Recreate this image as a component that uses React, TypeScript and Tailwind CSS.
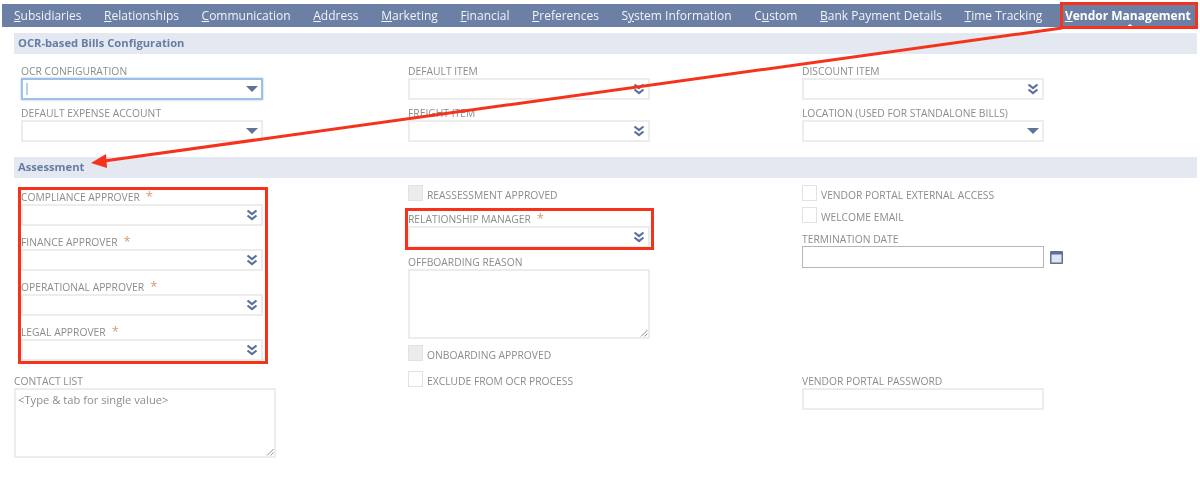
const TABS: [string, string, string][] = [
  ['', 'S', 'ubsidiaries'],
  ['', 'R', 'elationships'],
  ['', 'C', 'ommunication'],
  ['', 'A', 'ddress'],
  ['', 'M', 'arketing'],
  ['', 'F', 'inancial'],
  ['', 'P', 'references'],
  ['S', 'y', 'stem Information'],
  ['C', 'u', 'stom'],
  ['', 'B', 'ank Payment Details'],
  ['', 'T', 'ime Tracking'],
];

function DoubleArrow() {
  return (
    <svg width="12" height="12" viewBox="0 0 12 12" className="shrink-0 text-[#5b7199]" fill="none" stroke="currentColor" strokeWidth="2.2">
      <path d="M1.5 1.5 6 5l4.5-3.5" />
      <path d="M1.5 6.5 6 10l4.5-3.5" />
    </svg>
  );
}

function Caret() {
  return (
    <svg width="12" height="6" viewBox="0 0 12 6" className="shrink-0 text-[#5f7398]" fill="currentColor">
      <path d="M0 0h12L6 6z" />
    </svg>
  );
}

function Grip() {
  return (
    <svg width="8" height="8" viewBox="0 0 8 8" className="absolute bottom-0 right-0 text-[#8c8c8c]" stroke="currentColor" fill="none">
      <path d="M7.5 1 1 7.5M7.5 4.5 4.5 7.5" />
    </svg>
  );
}

function Label({ text, required }: { text: string; required?: boolean }) {
  return (
    <div className="h-[14px] whitespace-nowrap text-[10.3px] leading-[14px] text-[#8c8c8c]">
      {text}
      {required && <span className="ml-[6px] text-[13px] leading-[10px] text-[#d99a6c]">*</span>}
    </div>
  );
}

function Select({ label, required, icon = 'double', focus }: { label: string; required?: boolean; icon?: 'double' | 'caret'; focus?: boolean }) {
  return (
    <div className="w-[242px]">
      <Label text={label} required={required} />
      <div
        className={
          'relative flex h-[22px] items-center justify-end border-2 bg-white pr-[3px] ' +
          (focus ? 'border-[#9dc0e6] shadow-[0_0_2px_#9dc0e6]' : 'border-[#ececec]')
        }
      >
        {focus && <span className="absolute left-[3px] top-[3px] h-[12px] w-[2px] bg-[#b9d0ea]" />}
        {icon === 'double' ? <DoubleArrow /> : <Caret />}
      </div>
    </div>
  );
}

function Check({ label, disabled }: { label: string; disabled?: boolean }) {
  return (
    <div className="flex h-[16px] items-center">
      <span className={'h-[16px] w-[15px] border border-[#e2e2e2] ' + (disabled ? 'bg-[#ececec]' : 'bg-white')} />
      <span className="ml-[4px] mt-[3px] whitespace-nowrap text-[10.3px] leading-[14px] text-[#8c8c8c]">{label}</span>
    </div>
  );
}

function Section({ title }: { title: string }) {
  return (
    <div className="ml-[14px] mr-[3px] flex h-[21px] items-center bg-[#e4e8f1] pl-[4px] text-[11.2px] font-bold text-[#667da3]">
      {title}
    </div>
  );
}

export default function App() {
  return (
    <div className="relative h-[483px] w-[1200px] overflow-hidden bg-white pt-[4px] font-['Open_Sans',sans-serif] blur-[0.6px]">
      <nav className="mx-[2px] flex h-[23px] items-center gap-[22.6px] whitespace-nowrap bg-[#6b80a4] pl-[12px] text-[12px] text-[#f0f3f8]">
        {TABS.map(([a, k, b]) => (
          <span key={k + b}>
            {a}
            <span className="underline">{k}</span>
            {b}
          </span>
        ))}
        <span className="relative font-bold text-white">
          <span className="underline">V</span>endor Management
          <span className="absolute bottom-[-3px] left-[60px] h-0 w-0 border-x-[5px] border-b-[4px] border-x-transparent border-b-white" />
        </span>
      </nav>

      <div className="mt-[6px]">
        <Section title="OCR-based Bills Configuration" />
      </div>
      <div className="flex pl-[21px] pt-[10px]">
        <div className="flex w-[387px] flex-col gap-[6px]">
          <Select label="OCR CONFIGURATION" icon="caret" focus />
          <Select label="DEFAULT EXPENSE ACCOUNT" icon="caret" />
        </div>
        <div className="flex w-[394px] flex-col gap-[6px]">
          <Select label="DEFAULT ITEM" />
          <Select label="FREIGHT ITEM" />
        </div>
        <div className="flex flex-col gap-[6px]">
          <Select label="DISCOUNT ITEM" />
          <Select label="LOCATION (USED FOR STANDALONE BILLS)" icon="caret" />
        </div>
      </div>

      <div className="mt-[15px]">
        <Section title="Assessment" />
      </div>

      <div className="flex pl-[21px] pt-[12px]">
        <div className="w-[387px]">
          <div className="flex flex-col gap-[9px]">
            <Select label="COMPLIANCE APPROVER" required />
            <Select label="FINANCE APPROVER" required />
            <Select label="OPERATIONAL APPROVER" required />
            <Select label="LEGAL APPROVER" required />
          </div>
          <div className="ml-[-7px] mt-[13px] w-[262px]">
            <Label text="CONTACT LIST" />
            <div className="relative h-[70px] border-2 border-[#ececec] px-[2px] py-[2px] text-[11.2px] text-[#8c8c8c]">
              &lt;Type &amp; tab for single value&gt;
              <Grip />
            </div>
          </div>
        </div>

        <div className="w-[394px]">
          <div className="mt-[-5px]">
            <Check label="REASSESSMENT APPROVED" disabled />
          </div>
          <div className="mt-[11px]">
            <Select label="RELATIONSHIP MANAGER" required />
          </div>
          <div className="mt-[7px] w-[242px]">
            <Label text="OFFBOARDING REASON" />
            <div className="relative h-[70px] border-2 border-[#ececec]">
              <Grip />
            </div>
          </div>
          <div className="mt-[6px]">
            <Check label="ONBOARDING APPROVED" disabled />
          </div>
          <div className="mt-[10px]">
            <Check label="EXCLUDE FROM OCR PROCESS" />
          </div>
        </div>

        <div className="w-[270px]">
          <div className="mt-[-5px]">
            <Check label="VENDOR PORTAL EXTERNAL ACCESS" />
          </div>
          <div className="mt-[6px]">
            <Check label="WELCOME EMAIL" />
          </div>
          <div className="mt-[9px]">
            <Label text="TERMINATION DATE" />
            <div className="flex items-center">
              <div className="h-[22px] w-[242px] border border-[#b5b5b5] bg-white" />
              <svg width="13" height="13" viewBox="0 0 13 13" className="ml-[6px]">
                <rect width="13" height="13" rx="1" fill="#5b7199" />
                <rect x="1.5" y="3.5" width="10" height="8" fill="#dfe5ef" />
              </svg>
            </div>
          </div>
          <div className="mt-[106px]">
            <Label text="VENDOR PORTAL PASSWORD" />
            <div className="h-[22px] w-[242px] border-2 border-[#ececec]" />
          </div>
        </div>
      </div>

      {/* red annotations */}
      <div className="absolute left-[1060px] top-[2px] h-[27px] w-[138px] border-[3px] border-[#f5331c]" />
      <div className="absolute left-[18px] top-[187px] h-[177px] w-[250px] border-[3px] border-[#f5331c]" />
      <div className="absolute left-[405px] top-[208px] h-[42px] w-[249px] border-[3px] border-[#f5331c]" />
      <svg className="absolute left-0 top-0" width="1200" height="483" fill="none">
        <path d="M1062 28 104 161" stroke="#f5331c" strokeWidth="3" />
        <path d="M91 163 106 154 107 168z" fill="#f5331c" />
      </svg>
    </div>
  );
}
